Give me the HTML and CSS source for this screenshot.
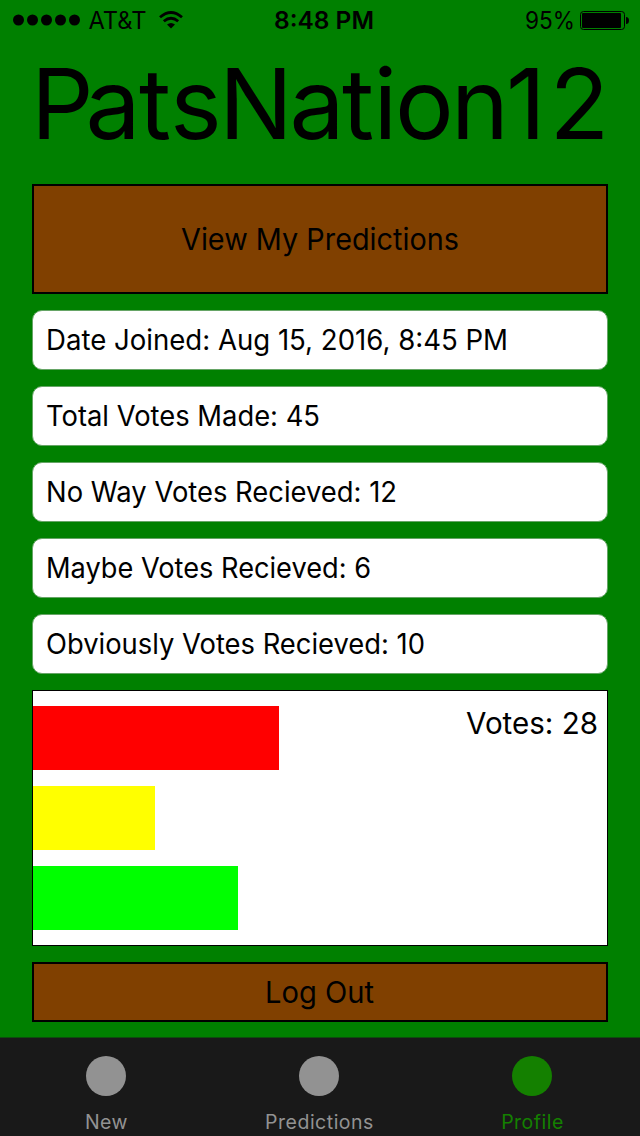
FILE: index.html
```html
<!DOCTYPE html>
<html lang="en">
<head>
<meta charset="utf-8">
<title>Profile</title>
<link rel="stylesheet" href="styles.css">
</head>
<body>
<header class="status">
  <div class="carrier">
    <svg class="signal" width="68" height="12" viewBox="0 0 68 12"><circle cx="5.5" cy="6" r="5.5"/><circle cx="19.5" cy="6" r="5.5"/><circle cx="33.5" cy="6" r="5.5"/><circle cx="47.5" cy="6" r="5.5"/><circle cx="61.5" cy="6" r="5.5"/></svg>
    <svg class="label" width="60" height="40"><text x="-.5" y="29" textLength="58" lengthAdjust="spacingAndGlyphs">AT&amp;T</text></svg>
    <svg class="wifi" width="24" height="18" viewBox="0 0 24 18"><g fill="none" stroke="#000" stroke-width="2.8"><path d="M1 6.300Q12-3.300 23 6.300M4.800 10.300Q12 4.200 19.200 10.300"/></g><path d="M12 17.500l-4-4Q12 10.300 16 13.500z"/></svg>
  </div>
  <svg class="clock" width="100" height="40"><text x="0" y="29" textLength="100" lengthAdjust="spacingAndGlyphs">8:48 PM</text></svg>
  <div class="power">
    <svg width="50" height="40"><text x="0" y="29" textLength="50" lengthAdjust="spacingAndGlyphs">95%</text></svg>
    <svg class="battery" width="50" height="19" viewBox="0 0 50 19"><rect x=".5" y=".5" width="44" height="18" rx="3" fill="none" stroke="#000"/><rect x="2" y="2" width="39" height="15" rx="1"/><path d="M46 6q3 0 3 3.500T46 13z"/></svg>
  </div>
</header>
<main class="profile">
  <svg class="name" width="576" height="144"><text x="-1 53.500 107 138 187 257.500 310 341.500 363 419 474 517.500" y="99">PatsNation12</text></svg>
  <button class="button predictions"><svg width="278" height="40"><text x="0" y="31" textLength="278" lengthAdjust="spacingAndGlyphs">View My Predictions</text></svg></button>
  <div class="field"><svg width="500" height="40"><text x="0" y="29.500" textLength="462" lengthAdjust="spacingAndGlyphs">Date Joined: Aug 15, 2016, 8:45 PM</text></svg></div>
  <div class="field"><svg width="500" height="40"><text x="0" y="29.500" textLength="274" lengthAdjust="spacingAndGlyphs">Total Votes Made: 45</text></svg></div>
  <div class="field"><svg width="500" height="40"><text x="0" y="29.500" textLength="351" lengthAdjust="spacingAndGlyphs">No Way Votes Recieved: 12</text></svg></div>
  <div class="field"><svg width="500" height="40"><text x="0" y="29.500" textLength="325" lengthAdjust="spacingAndGlyphs">Maybe Votes Recieved: 6</text></svg></div>
  <div class="field"><svg width="500" height="40"><text x="0" y="29.500" textLength="379" lengthAdjust="spacingAndGlyphs">Obviously Votes Recieved: 10</text></svg></div>
  <section class="chart">
    <div class="bars"><div class="bar red"></div><div class="bar yellow"></div><div class="bar lime"></div></div>
    <svg class="total" width="133" height="40"><text x="0" y="30" textLength="132" lengthAdjust="spacingAndGlyphs">Votes: 28</text></svg>
  </section>
  <button class="button logout"><svg width="110" height="40"><text x="0" y="31" textLength="109" lengthAdjust="spacingAndGlyphs">Log Out</text></svg></button>
</main>
<nav class="tabs">
  <div class="tab"><span class="dot"></span><span class="caption">New</span></div>
  <div class="tab"><span class="dot"></span><span class="caption">Predictions</span></div>
  <div class="tab active"><span class="dot"></span><span class="caption">Profile</span></div>
</nav>
</body>
</html>
```
FILE: styles.css
```css
* { box-sizing: border-box; }
body { margin: 0; width: 640px; height: 1136px; overflow: hidden; background: #008000; color: #000; font-family: Inter, Roboto, sans-serif; }
svg { display: block; flex: none; overflow: visible; }
.status { display: grid; grid-template-columns: 274px 100px 1fr; height: 40px; font-size: 24px; }
.carrier, .power { display: flex; align-items: center; }
.carrier { padding-left: 13px; }
.label { margin-left: 8px; }
.wifi { margin-left: 10px; }
.clock { font-weight: 600; }
.power { padding-left: 151px; }
.battery { margin-left: 5px; }
.profile { display: flex; flex-direction: column; padding: 0 32px; }
.name { font-size: 98px; font-weight: 400; }
.button { display: flex; align-items: center; justify-content: center; width: 576px; padding: 0; border: 2px solid #000; background: #804000; font: 30px Inter, Roboto, sans-serif; color: #000; }
.predictions { height: 110px; margin-bottom: 16px; }
.field { display: flex; align-items: center; height: 60px; margin-bottom: 16px; padding-left: 13px; border: 1px solid #66a566; border-radius: 10px; background: #fff; font-size: 28px; }
.chart { display: flex; justify-content: space-between; height: 256px; padding: 15px 8px 15px 0; border: 1px solid #000; background: #fff; font-size: 30px; }
.bars { display: flex; flex-direction: column; gap: 16px; }
.bar { height: 64px; }
.red { width: 246px; background: #f00; }
.yellow { width: 122.4px; background: #ff0; }
.lime { width: 205px; background: #0f0; }
.total { margin-top: -2px; }
.logout { height: 60px; margin-top: 16px; }
.tabs { display: grid; grid-template-columns: 212px 214px 212px; height: 99px; margin-top: 15px; padding-top: 18px; border-top: 1px solid #0d4d0d; background: #191919; color: #929292; font-size: 19.5px; }
.tab { display: flex; flex-direction: column; align-items: center; }
.dot { width: 40px; height: 40px; border-radius: 50%; background: #929292; }
.caption { margin-top: 14px; padding-left: 1px; line-height: 24px; letter-spacing: .5px; }
.active { color: #148000; }
.active .dot { background: #148000; }
```
